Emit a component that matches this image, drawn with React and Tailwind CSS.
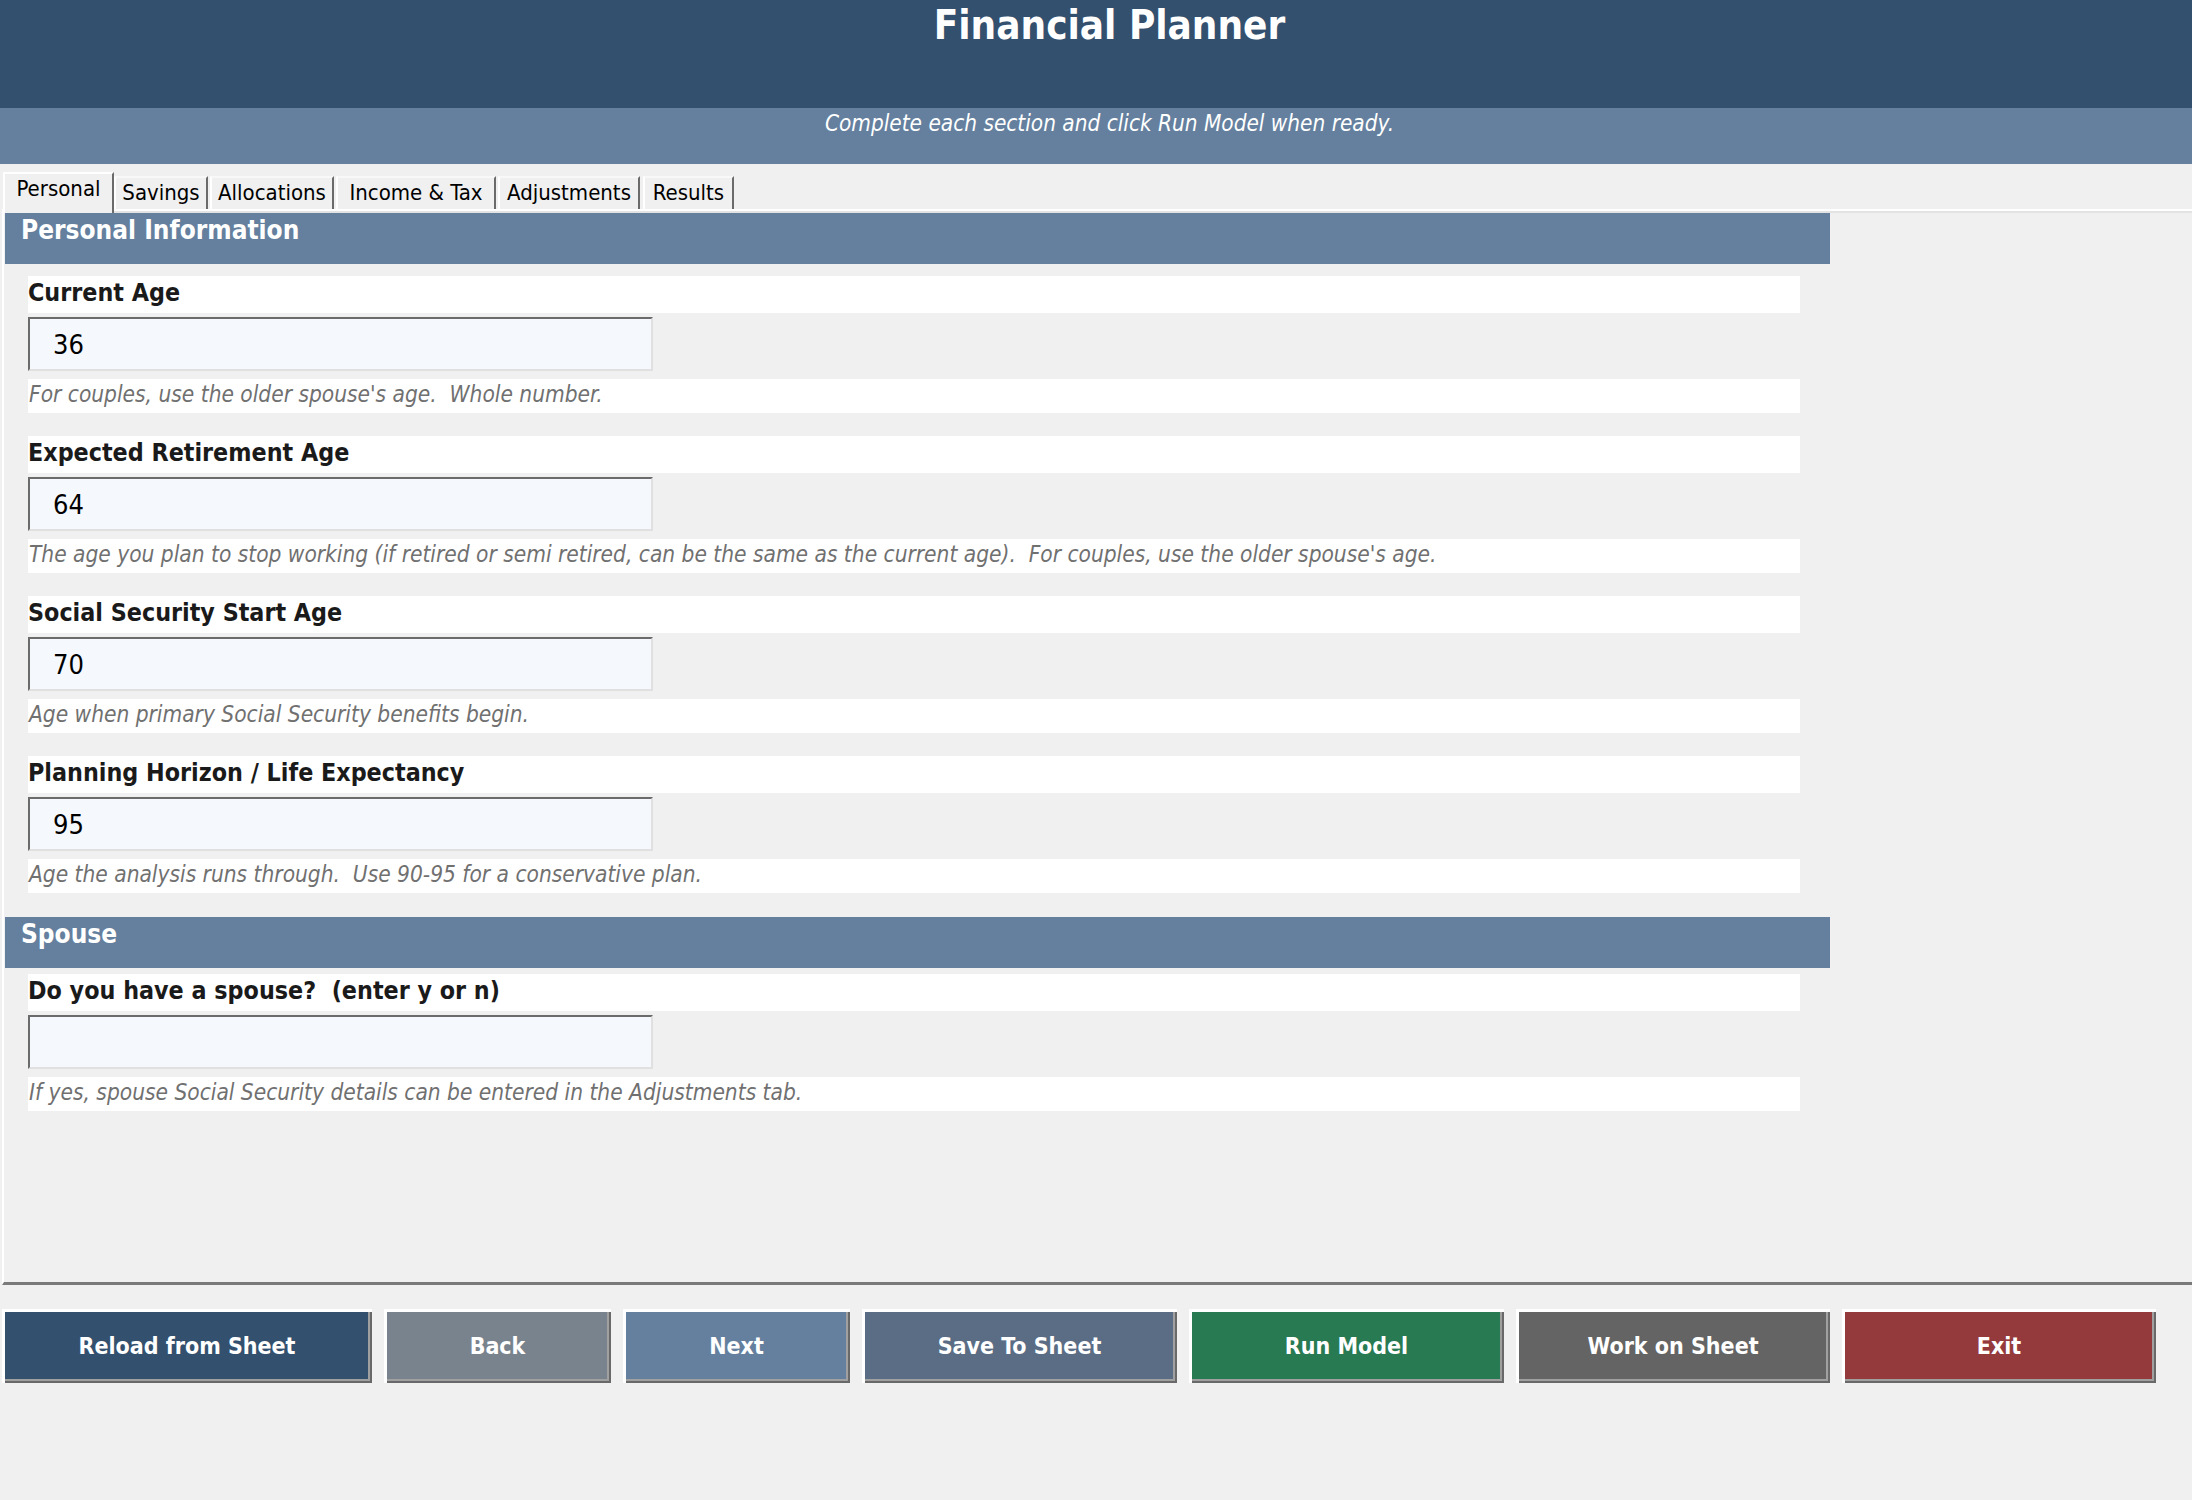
import React from "react";

const tabs = [
    {name: "Personal", w: "w-[111px]", ml: "ml-0"},
    {name: "Savings", w: "w-[94px]", ml: "ml-0"},
    {name: "Allocations", w: "w-[124px]", ml: "ml-[2px]"},
    {name: "Income & Tax", w: "w-[160px]", ml: "ml-[2px]"},
    {name: "Adjustments", w: "w-[142px]", ml: "ml-[2px]"},
    {name: "Results", w: "w-[91px]", ml: "ml-[3px]"},
];

const buttons = [
    {label: "Reload from Sheet", w: "w-[370px]", bg: "bg-[#33506e]"},
    {label: "Back", w: "w-[227px]", bg: "bg-[#79838d]"},
    {label: "Next", w: "w-[227px]", bg: "bg-[#64809e]"},
    {label: "Save To Sheet", w: "w-[315px]", bg: "bg-[#5a6d85]"},
    {label: "Run Model", w: "w-[315px]", bg: "bg-[#277a52]"},
    {label: "Work on Sheet", w: "w-[314px]", bg: "bg-[#646464]"},
    {label: "Exit", w: "w-[314px]", bg: "bg-[#953a3c]"},
];

const SectionHeader = ({title}) => (
    <div className="ml-[1px] h-[51px] w-[1825px] bg-[#64809e] pl-[16px] pt-[2px] text-[26px] font-bold leading-[30px] text-white">
        {title}
    </div>
);

const Field = ({label, value, help, className}) => (
    <div className={className}>
        <div className="ml-[24px] h-[37px] w-[1772px] whitespace-pre bg-white text-[24.8px] font-bold leading-[34px] text-[#1a1a1a]">
            {label}
        </div>
        <input
            readOnly
            defaultValue={value}
            className="ml-[24px] mt-[4px] block h-[54px] w-[625px] border-2 border-t-[#6b6b6b] border-l-[#6b6b6b] border-r-[#e0e0e0] border-b-[#e0e0e0] bg-[#f5f8fc] pl-[23px] text-[27px] leading-[50px] text-black outline-none"
        />
        <div className="ml-[24px] mt-[8px] h-[34px] w-[1772px] whitespace-pre bg-white pl-[1px] text-[22.5px] italic leading-[30px] text-[#707070]">
            {help}
        </div>
    </div>
);

const App = () => {
    return (
        <div className="min-h-[1500px] w-[2192px] overflow-hidden bg-[#f0f0f0] font-['DejaVu_Sans_Condensed','DejaVu_Sans',sans-serif] [font-stretch:condensed]">
            <header className="h-[108px] bg-[#33506e] pl-[27px] pt-[1px] text-center">
                <h1 className="text-[40px] font-bold leading-[48px] text-white">Financial Planner</h1>
            </header>
            <div className="h-[56px] bg-[#64809e] pl-[27px] pt-[2px] text-center text-[22.4px] italic leading-[26px] text-white">
                Complete each section and click Run Model when ready.
            </div>

            {/* tab strip */}
            <div className="flex h-[45px] items-end pl-[3px]">
                {tabs.map((t, i) =>
                    i === 0 ? (
                        <div key={t.name}
                             className={`${t.w} ${t.ml} relative z-10 -mb-[4px] h-[41px] border-l-2 border-t-2 border-r-2 border-l-white border-t-white border-r-[#6b6b6b] bg-[#f0f0f0] text-center text-[22px] leading-[30px] text-black`}>
                            {t.name}
                        </div>
                    ) : (
                        <div key={t.name}
                             className={`${t.w} ${t.ml} h-[33px] border-l-2 border-t-2 border-r-2 border-l-white border-t-[#f8f8f8] border-r-[#6b6b6b] bg-[#f0f0f0] text-center text-[22px] leading-[29px] text-black`}>
                            {t.name}
                        </div>
                    )
                )}
            </div>

            {/* tab panel */}
            <div className="ml-[2px] h-[1076px] border-l-2 border-t-2 border-b-[3px] border-l-white border-t-white border-b-[#7a7a7a]">
                <div className="h-[2px] bg-[#e3e3e3]"/>
                <SectionHeader title="Personal Information"/>
                <Field className="mt-[12px]" label="Current Age" value="36"
                       help="For couples, use the older spouse's age.  Whole number."/>
                <Field className="mt-[23px]" label="Expected Retirement Age" value="64"
                       help="The age you plan to stop working (if retired or semi retired, can be the same as the current age).  For couples, use the older spouse's age."/>
                <Field className="mt-[23px]" label="Social Security Start Age" value="70"
                       help="Age when primary Social Security benefits begin."/>
                <Field className="mt-[23px]" label="Planning Horizon / Life Expectancy" value="95"
                       help="Age the analysis runs through.  Use 90-95 for a conservative plan."/>
                <div className="mt-[24px]">
                    <SectionHeader title="Spouse"/>
                </div>
                <Field className="mt-[6px]" label="Do you have a spouse?  (enter y or n)" value=""
                       help="If yes, spouse Social Security details can be entered in the Adjustments tab."/>
            </div>

            {/* buttons */}
            <div className="mt-[24px] flex gap-[12px] pl-[2px]">
                {buttons.map((b) => (
                    <button key={b.label}
                            className={`${b.w} ${b.bg} flex h-[74px] items-center justify-center text-[23px] font-bold text-white shadow-[inset_3px_3px_0_#ffffff,inset_-2px_-2px_0_#696969,inset_-4px_-4px_0_#a0a0a0]`}>
                        {b.label}
                    </button>
                ))}
            </div>
        </div>
    );
};

export default App;
